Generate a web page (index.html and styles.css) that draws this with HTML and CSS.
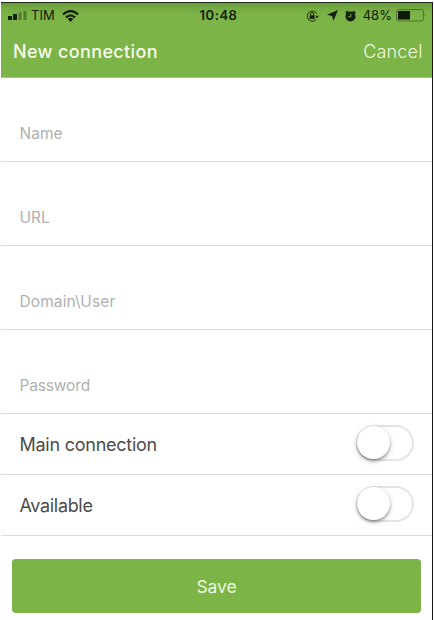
FILE: index.html
```
<!DOCTYPE html>
<html lang="en">
<head>
<meta charset="utf-8">
<title>New connection</title>
<link rel="stylesheet" href="styles.css">
</head>
<body>
<main class="screen">
  <header class="header">
    <div class="status">
      <div class="status-side">
        <svg class="signal" width="19" height="9" viewBox="0 0 19 9"><path d="M0 5h4v4H0zM5 3h4v6H5z" fill="#14200c"/><path d="M10.5 1.5h3V9h-3zM15.5 0h3v9h-3z" fill="#507b2b"/></svg>
        <span class="carrier">TIM</span>
        <svg class="wifi" width="17" height="12" viewBox="0 0 17 12"><g fill="none" stroke="#14200c" stroke-width="2.3"><path d="M1 4.5Q8.5-2.4 16 4.5"/><path d="M3.9 7.5Q8.5 3.2 13.1 7.5"/></g><path d="M5.7 9Q8.5 6.7 11.3 9L8.5 12z" fill="#14200c"/></svg>
      </div>
      <span class="time">10:48</span>
      <div class="status-side status-right">
        <svg class="lock" width="13" height="12" viewBox="0 0 13 12"><path d="M10.2 9.3A5 5 0 1 1 10.8 4" fill="none" stroke="#1c2b12" stroke-width="1"/><path d="M9 5.8h4L11 8.3z" fill="#1c2b12"/><path d="M3.6 5.3h5v3.6h-5z" fill="#14200c"/><path d="M4.6 5.5V4.2a1.5 1.5 0 0 1 3 0v1.3" fill="none" stroke="#14200c"/></svg>
        <svg class="arrow" width="11" height="11" viewBox="0 0 11 11"><path d="M11 0 6.4 11 5.2 6 0 4.8z" fill="#14200c"/></svg>
        <svg class="alarm" width="11" height="12" viewBox="0 0 11 12"><circle cx="5.5" cy="6.5" r="5" fill="#14200c"/><path d="M.7 3.4 3 1.1M8 1.1l2.3 2.3" stroke="#14200c" stroke-width="1.6"/><path d="M5.8 3.7v3.1H3.4" fill="none" stroke="#7cb448" stroke-width="1"/></svg>
        <span class="percent">48%</span>
        <svg class="battery" width="30" height="13" viewBox="0 0 30 13"><rect x=".5" y=".5" width="27" height="11.5" rx="2.3" fill="none" stroke="#4c7430"/><path d="M2 2h12v8.5H2z" fill="#101a09"/><path d="M28.6 4.5q1.6 1.8 0 3.6z" fill="#4c7430"/></svg>
      </div>
    </div>
    <div class="nav">
      <h1 class="title">New connection</h1>
      <span class="cancel">Cancel</span>
    </div>
  </header>
  <div class="field"><span class="name">Name</span></div>
  <div class="field"><span class="url">URL</span></div>
  <div class="field"><span class="user">Domain\User</span></div>
  <div class="field"><span class="password">Password</span></div>
  <div class="option"><span class="main-label">Main connection</span><span class="switch"><span class="knob"></span></span></div>
  <div class="option"><span class="available-label">Available</span><span class="switch"><span class="knob"></span></span></div>
  <div class="save"><span class="save-label">Save</span></div>
</main>
</body>
</html>
```
FILE: styles.css
```
* { box-sizing: border-box; }
body {
  margin: 0;
  background: #fff;
  font-family: Inter, "Liberation Sans", sans-serif;
}
svg { display: block; flex: none; }
.screen {
  width: 432px;
  height: 618px;
  margin: 2px 0 0 1px;
  border-top: 1px solid #1d2d18;
  border-right: 1px solid #18181a;
  overflow: hidden;
}
.header {
  height: 75px;
  background: linear-gradient(#659a3b 0, #76aa43 5px, #7cb448 12px);
  border-bottom: 1px solid #a3ca7f;
}
.status {
  display: grid;
  grid-template-columns: 1fr auto 1fr;
  align-items: center;
  height: 25px;
  padding: 0 6px 0 7px;
  color: #14200c;
  font-size: 13px;
  line-height: 25px;
}
.status-side { display: flex; align-items: center; }
.status-right { justify-content: flex-end; }
.carrier { margin-left: 4px; }
.wifi { margin-left: 7px; }
.time { margin-left: 3px; font-weight: 600; letter-spacing: .55px; }
.arrow { margin-left: 8px; }
.alarm { margin-left: 7px; }
.percent { margin-left: 7px; letter-spacing: .05px; }
.battery { margin-left: 4px; }
.nav {
  display: flex;
  justify-content: space-between;
  align-items: center;
  height: 46px;
  padding: 0 9.5px 0 12px;
  color: #f6fbec;
}
.title {
  margin: 0;
  font-size: 18px;
  font-weight: 500;
  letter-spacing: .36px;
}
.cancel {
  font-size: 18px;
  font-weight: 350;
  letter-spacing: .15px;
  color: #eff8df;
}
.field {
  height: 84px;
  padding: 46px 18.5px 0;
  border-bottom: 1px solid #dcdcdc;
  color: #b0b0b0;
  font-size: 15.5px;
  line-height: 20px;
}
.user { letter-spacing: .1px; }
.password { letter-spacing: -.15px; }
.option {
  display: flex;
  align-items: center;
  justify-content: space-between;
  height: 61px;
  padding: 0 18px 0 18.5px;
  border-bottom: 1px solid #dcdcdc;
  color: #4b4b4b;
  font-size: 18px;
  letter-spacing: -.25px;
}
.available-label { letter-spacing: -.33px; }
.switch {
  width: 58px;
  height: 36px;
  margin-bottom: 2px;
  border: 2px solid #e5e5e5;
  border-radius: 18px;
}
.knob {
  display: block;
  width: 33px;
  height: 33px;
  margin: -1px 0 0 -1px;
  border-radius: 50%;
  background: #fff;
  box-shadow: 0 2px 3px rgba(0,0,0,.34), 0 2px 7px rgba(0,0,0,.14);
}
.save {
  display: flex;
  align-items: center;
  justify-content: center;
  height: 54px;
  margin: 23px 11px 0 11px;
  border-radius: 4px;
  background: #7cb448;
  color: #edf7df;
  font-size: 17.5px;
  letter-spacing: -.1px;
}
```
